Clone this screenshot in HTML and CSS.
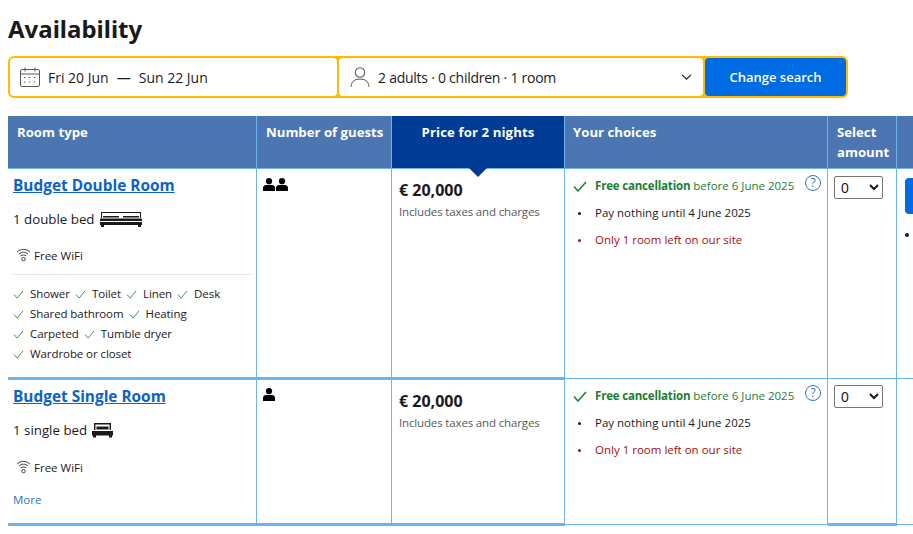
FILE: index.html
```html
<!DOCTYPE html>
<html lang="en">
<head>
<meta charset="utf-8">
<title>Availability</title>
<link rel="stylesheet" href="styles.css">
</head>
<body>
<main class="page">
  <h2 class="title">Availability</h2>
  <form class="search">
    <div class="field dates">
      <svg class="ico-cal" viewBox="0 0 20 20" width="20" height="20" fill="none" stroke="#595959" stroke-width="1"><rect x="0.5" y="2.5" width="19" height="17" rx="1.5"/><path d="M0.5 7h19M5 0.500v4M15 0.500v4"/><path d="M4 10.500h2M9 10.500h2M14 10.500h2M4 15h2M9 15h2M14 15h2" stroke-dasharray="1.4 1"/></svg>
      <span>Fri 20 Jun</span><span class="dash">—</span><span>Sun 22 Jun</span>
    </div>
    <div class="field guests">
      <svg class="ico-person" viewBox="0 0 20 20" width="20" height="20" fill="none" stroke="#595959" stroke-width="1.1"><circle cx="10" cy="5.500" r="4.700"/><path d="M1 20c0-5 3.500-8 9-8s9 3 9 8"/></svg>
      <span class="guest-text">2 adults · 0 children · 1 room</span>
      <svg class="ico-chev" viewBox="0 0 12 8" width="11" height="7" fill="none" stroke="#1a1a1a" stroke-width="1.3"><path d="M1 1l5 5 5-5"/></svg>
    </div>
    <button class="change" type="button">Change search</button>
  </form>
  <table class="rooms">
    <colgroup><col class="c1"><col class="c2"><col class="c3"><col class="c4"><col class="c5"><col class="c6"></colgroup>
    <thead>
      <tr>
        <th>Room type</th>
        <th>Number of guests</th>
        <th class="price-head">Price for 2 nights</th>
        <th class="choices-head">Your choices</th>
        <th>Select amount</th>
        <th></th>
      </tr>
    </thead>
    <tbody>
      <tr class="row-a">
        <td class="thick">
          <a class="room-name" href="#">Budget Double Room</a>
          <div class="bed">1 double bed
            <svg viewBox="0 0 42 15" width="42" height="15" fill="#1a1a1a"><path d="M1 0h40v6h-1V1H2v5H1z"/><path d="M3 4h16v1.500H3zM23 4h16v1.500H23z"/><path d="M0 6.500h42v2.500H0zM0 10h42v3H0zM1 13h3v2H1zM38 13h3v2h-3z"/></svg>
          </div>
          <div class="wifi"><svg viewBox="0 0 16 16" width="15" height="15" fill="none" stroke="#333" stroke-width="1"><path d="M1 5.500c4-4 10-4 14 0M3 7.500c3-2.600 7-2.600 10 0M5 9.500c1.800-1.400 4.200-1.400 6 0"/><circle cx="8" cy="13" r="1.800"/></svg>Free WiFi</div>
          <ul class="facilities">
            <li><svg class="tick" viewBox="0 0 12 10" width="11" height="9"><path d="M1 5l3.500 4L11 1"/></svg>Shower</li>
            <li><svg class="tick" viewBox="0 0 12 10" width="11" height="9"><path d="M1 5l3.500 4L11 1"/></svg>Toilet</li>
            <li><svg class="tick" viewBox="0 0 12 10" width="11" height="9"><path d="M1 5l3.500 4L11 1"/></svg>Linen</li>
            <li><svg class="tick" viewBox="0 0 12 10" width="11" height="9"><path d="M1 5l3.500 4L11 1"/></svg>Desk</li>
            <li class="brk"></li>
            <li><svg class="tick" viewBox="0 0 12 10" width="11" height="9"><path d="M1 5l3.500 4L11 1"/></svg>Shared bathroom</li>
            <li><svg class="tick" viewBox="0 0 12 10" width="11" height="9"><path d="M1 5l3.500 4L11 1"/></svg>Heating</li>
            <li class="brk"></li>
            <li><svg class="tick" viewBox="0 0 12 10" width="11" height="9"><path d="M1 5l3.500 4L11 1"/></svg>Carpeted</li>
            <li><svg class="tick" viewBox="0 0 12 10" width="11" height="9"><path d="M1 5l3.500 4L11 1"/></svg>Tumble dryer</li>
            <li class="brk"></li>
            <li><svg class="tick" viewBox="0 0 12 10" width="11" height="9"><path d="M1 5l3.500 4L11 1"/></svg>Wardrobe or closet</li>
          </ul>
        </td>
        <td class="thick"><div class="people"><svg viewBox="0 0 12 13" width="12" height="13"><circle cx="6" cy="3.200" r="3.100"/><path d="M0 13v-3c0-2 1.500-3 3-3h6c1.500 0 3 1 3 3v3z"/></svg><svg viewBox="0 0 12 13" width="12" height="13"><circle cx="6" cy="3.200" r="3.100"/><path d="M0 13v-3c0-2 1.500-3 3-3h6c1.500 0 3 1 3 3v3z"/></svg></div></td>
        <td class="thick">
          <div class="price">€ 20,000</div>
          <div class="taxes">Includes taxes and charges</div>
        </td>
        <td>
          <div class="choice free"><svg viewBox="0 0 14 11" width="14" height="11"><path d="M1 5.500l4 4.500L13 1"/></svg><span><b>Free cancellation</b> before 6 June 2025</span><span class="help">?</span></div>
          <div class="choice"><i class="dot"></i><span>Pay nothing until 4 June 2025</span></div>
          <div class="choice left"><i class="dot"></i><span>Only 1 room left on our site</span></div>
        </td>
        <td><select class="amount"><option>0</option></select></td>
        <td class="reserve"><div class="reserve-btn"></div><ul class="notes"><li></li></ul></td>
      </tr>
      <tr class="row-b">
        <td class="thick">
          <a class="room-name" href="#">Budget Single Room</a>
          <div class="bed">1 single bed
            <svg viewBox="0 0 21 15" width="21" height="15" fill="#1a1a1a"><path d="M2 0h17v7h-1.400V1.400H3.400V7H2z"/><path d="M4.500 3.500h12v3h-12z"/><path d="M0 8h21v4.500H0zM1 12.500h3v2H1zM17 12.500h3v2h-3z"/></svg>
          </div>
          <div class="wifi"><svg viewBox="0 0 16 16" width="15" height="15" fill="none" stroke="#333" stroke-width="1"><path d="M1 5.500c4-4 10-4 14 0M3 7.500c3-2.600 7-2.600 10 0M5 9.500c1.800-1.400 4.200-1.400 6 0"/><circle cx="8" cy="13" r="1.800"/></svg>Free WiFi</div>
          <a class="more" href="#">More</a>
        </td>
        <td class="thick"><div class="people"><svg viewBox="0 0 12 13" width="12" height="13"><circle cx="6" cy="3.200" r="3.100"/><path d="M0 13v-3c0-2 1.500-3 3-3h6c1.500 0 3 1 3 3v3z"/></svg></div></td>
        <td class="thick">
          <div class="price">€ 20,000</div>
          <div class="taxes">Includes taxes and charges</div>
        </td>
        <td>
          <div class="choice free"><svg viewBox="0 0 14 11" width="14" height="11"><path d="M1 5.500l4 4.500L13 1"/></svg><span><b>Free cancellation</b> before 6 June 2025</span><span class="help">?</span></div>
          <div class="choice"><i class="dot"></i><span>Pay nothing until 4 June 2025</span></div>
          <div class="choice left"><i class="dot"></i><span>Only 1 room left on our site</span></div>
        </td>
        <td class="thick"><select class="amount"><option>0</option></select></td>
        <td></td>
      </tr>
    </tbody>
  </table>
</main>
</body>
</html>
```
FILE: styles.css
```css
* { box-sizing: border-box; }
html, body { margin: 0; height: 534px; overflow: hidden; background: #fff; }
body { font-family: "Open Sans", "Noto Sans", sans-serif; color: #1a1a1a; font-size: 11.5px; }
.page { padding: 13px 0 0 8px; width: 905px; }
.title { margin: 0 0 11px; font: 700 24px/32px "Noto Sans", sans-serif; color: #1a1a1a; }
.search { display: flex; width: 840px; height: 42px; background: #febb02; border: 2px solid #febb02; border-radius: 6px; gap: 2px; }
.field { display: flex; align-items: center; background: #fff; border-radius: 4px; font-size: 14px; }
.dates { width: 327px; padding-left: 10px; }
.dash { margin: 0 8px; }
.ico-cal { margin-right: 8px; }
.guests { width: 364px; padding-left: 11px; }
.guest-text { letter-spacing: -0.25px; }
.ico-person { margin-right: 8px; }
.ico-chev { margin-left: auto; margin-right: 11px; }
.change { width: 141px; border: 0; border-radius: 4px; background: #006ce4; color: #fff; font: 600 13px "Open Sans", sans-serif; padding: 0; }
.rooms { margin-top: 18px; border-collapse: separate; border-spacing: 0; table-layout: fixed; width: 931px; }
.c1 { width: 249px; } .c2 { width: 135px; } .c3 { width: 173px; } .c4 { width: 263px; } .c5 { width: 69px; } .c6 { width: 42px; }
th { height: 53px; background: #4c76b2; color: #fff; text-align: left; vertical-align: top; font-size: 13.2px; line-height: 20px; font-weight: 700; padding: 6px 5px 0 9px; border-right: 1px solid #6bb4f0; border-bottom: 1px solid #6bb4f0; }
th.price-head { background: #003b95; text-align: center; position: relative; padding: 6px 5px 0; letter-spacing: 0.1px; }
th.price-head::after { content: ""; position: absolute; left: 77px; bottom: -9px; border: 9px solid transparent; border-bottom: 0; border-top-color: #003b95; }
th.choices-head { padding-left: 8px; }
td { vertical-align: top; border-right: 1px solid #6bb4f0; border-bottom: 1px solid #6bb4f0; padding: 0; }
td:first-child { padding: 7px 5px 0 5px; }
.row-b td:first-child { padding-top: 8px; }
td:nth-child(2) { padding: 9px 0 0 6px; }
td:nth-child(3) { padding: 11px 0 0 7px; }
.row-b td:nth-child(3) { padding-top: 12px; }
td:nth-child(4) { padding: 8px 6px 0 8px; }
td:nth-child(5) { padding: 7px 0 0 6px; }
.row-b td:nth-child(5) { padding-top: 6px; }
td:last-child { border-right: 0; }
td.thick { box-shadow: 0 1px 0 #6bb4f0, inset 0 -1px 0 #6bb4f0; }
.row-a td { height: 210px; }
.row-b td { height: 146px; }
.room-name { display: block; font-size: 15.4px; line-height: 20px; font-weight: 700; color: #0b62c9; }
.bed { display: flex; align-items: center; gap: 5px; margin-top: 13px; font-size: 13.3px; line-height: 20px; }
.wifi { display: flex; align-items: center; gap: 3px; margin: 19px 0 0 3px; line-height: 18px; }
.wifi svg { margin-bottom: 3px; }
.row-a .wifi { margin-top: 18px; padding-bottom: 9px; margin-left: 0; padding-left: 3px; border-bottom: 1px solid #e7e7e7; }
.facilities { list-style: none; margin: 9px 0 0; padding: 0; display: flex; flex-wrap: wrap; column-gap: 5px; letter-spacing: -0.08px; }
.facilities li { display: flex; align-items: center; gap: 6px; line-height: 20px; }
.facilities .brk { flex-basis: 100%; height: 0; }
.tick { fill: none; stroke: #2e8b3d; stroke-width: 1; }
.more { display: block; margin-top: 14px; line-height: 18px; color: #2a78bd; text-decoration: none; }
.people { display: flex; gap: 1px; height: 13px; }
.people svg { fill: #000; }
.price { font-size: 16px; font-weight: 700; line-height: 20px; }
.taxes { margin-top: 3px; line-height: 18px; color: #595959; letter-spacing: -0.15px; }
.choice { display: flex; align-items: center; line-height: 18px; margin-bottom: 9px; }
.choice svg { flex: none; margin-right: 8px; fill: none; stroke: #1a7d35; stroke-width: 1.500; }
.free { color: #1a7d35; }
.free b { font-weight: 700; letter-spacing: -0.18px; }
.help { margin: -6px 0 0 auto; flex: none; width: 16px; height: 16px; border: 1px solid #2a78bd; border-radius: 50%; color: #2a78bd; font-size: 12px; line-height: 14px; text-align: center; }
.dot { flex: none; width: 3px; height: 3px; margin: 0 14px 0 5px; border-radius: 50%; background: currentColor; }
.left { color: #a30e0e; }
.amount { width: 49px; height: 23px; font: 14px "Liberation Sans", sans-serif; color: #1a1a1a; background: #fff; border: 1px solid #767676; border-radius: 2px; padding-left: 2px; }
td.reserve { padding: 9px 0 0 8px; }
.reserve-btn { height: 36px; background: #006ce4; border-radius: 4px; }
.notes { margin: 13px 0 0; padding: 0; list-style-position: inside; height: 18px; }
```
